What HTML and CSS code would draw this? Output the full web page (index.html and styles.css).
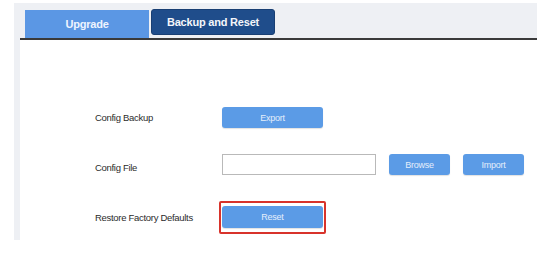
FILE: index.html
```html
<!DOCTYPE html>
<html>
<head>
<meta charset="utf-8">
<link rel="stylesheet" href="styles.css">
</head>
<body>
<div class="panel">
  <div class="tabs">
    <div class="tab tab-upgrade">Upgrade</div>
    <div class="tab tab-active">Backup and Reset</div>
  </div>
  <div class="content">
    <div class="row">
      <div class="label">Config Backup</div>
      <button class="btn btn-wide">Export</button>
    </div>
    <div class="row">
      <div class="label label-low">Config File</div>
      <input class="file-input" type="text">
      <button class="btn btn-small">Browse</button>
      <button class="btn btn-small">Import</button>
    </div>
    <div class="row row-reset">
      <div class="label">Restore Factory Defaults</div>
      <div class="highlight">
        <button class="btn btn-wide btn-reset">Reset</button>
      </div>
    </div>
  </div>
</div>
</body>
</html>
```
FILE: styles.css
```css
html, body {
  margin: 0;
  padding: 0;
  background: #ffffff;
  font-family: "Liberation Sans", Arial, sans-serif;
}
.panel {
  margin: 3px 13px 0 14px;
  padding-left: 6px;
  background: #eef0f4;
  height: 237px;
  box-sizing: border-box;
}
.tabs {
  height: 35px;
  display: flex;
  align-items: flex-start;
  padding-left: 5px;
  border-bottom: 2px solid #3a3a3a;
}
.tab {
  width: 124px;
  height: 26px;
  display: flex;
  align-items: center;
  justify-content: center;
  font-size: 11px;
  font-weight: bold;
  letter-spacing: -0.2px;
  box-sizing: border-box;
}
.tab-upgrade {
  margin-top: 7px;
  height: 28px;
  background: #5b97e4;
  color: #eef4ff;
  padding-bottom: 1px;
}
.tab-active {
  margin-top: 6px;
  margin-left: 2px;
  background: #1f4d8b;
  color: #f4f6fa;
  border: 1px solid #193f73;
  border-radius: 3px;
}
.content {
  background: #ffffff;
  height: 200px;
  padding-top: 67px;
  box-sizing: border-box;
  display: flex;
  flex-direction: column;
  gap: 26px;
}
.row {
  display: flex;
  align-items: center;
  height: 21px;
}
.row-reset {
  height: 33px;
}
.label {
  width: 124px;
  margin-left: 75px;
  font-size: 9.5px;
  letter-spacing: -0.3px;
  color: #2b2b2b;
}
.label-low {
  margin-top: 6px;
}
.btn {
  height: 21px;
  border: none;
  border-radius: 3px;
  background: #5b9be6;
  color: #e4eefb;
  font-family: "Liberation Sans", Arial, sans-serif;
  font-size: 9px;
  letter-spacing: -0.25px;
  padding: 0;
  box-shadow: 0 1px 1px rgba(0,0,0,0.12);
}
.btn-wide {
  width: 101px;
  margin-left: 3px;
}
.btn-small {
  width: 61px;
  margin-left: 13px;
}
.file-input {
  width: 154px;
  height: 21px;
  margin: 0 0 0 3px;
  box-sizing: border-box;
  border: 1px solid #b9b9b9;
  padding: 0;
}
.highlight {
  border: 2px solid #d8332b;
  border-radius: 2px;
  padding: 3px 1px 4px 1px;
  height: 33px;
  box-sizing: border-box;
  display: flex;
}
.btn-reset {
  margin-left: 0;
  height: 22px;
}
```
